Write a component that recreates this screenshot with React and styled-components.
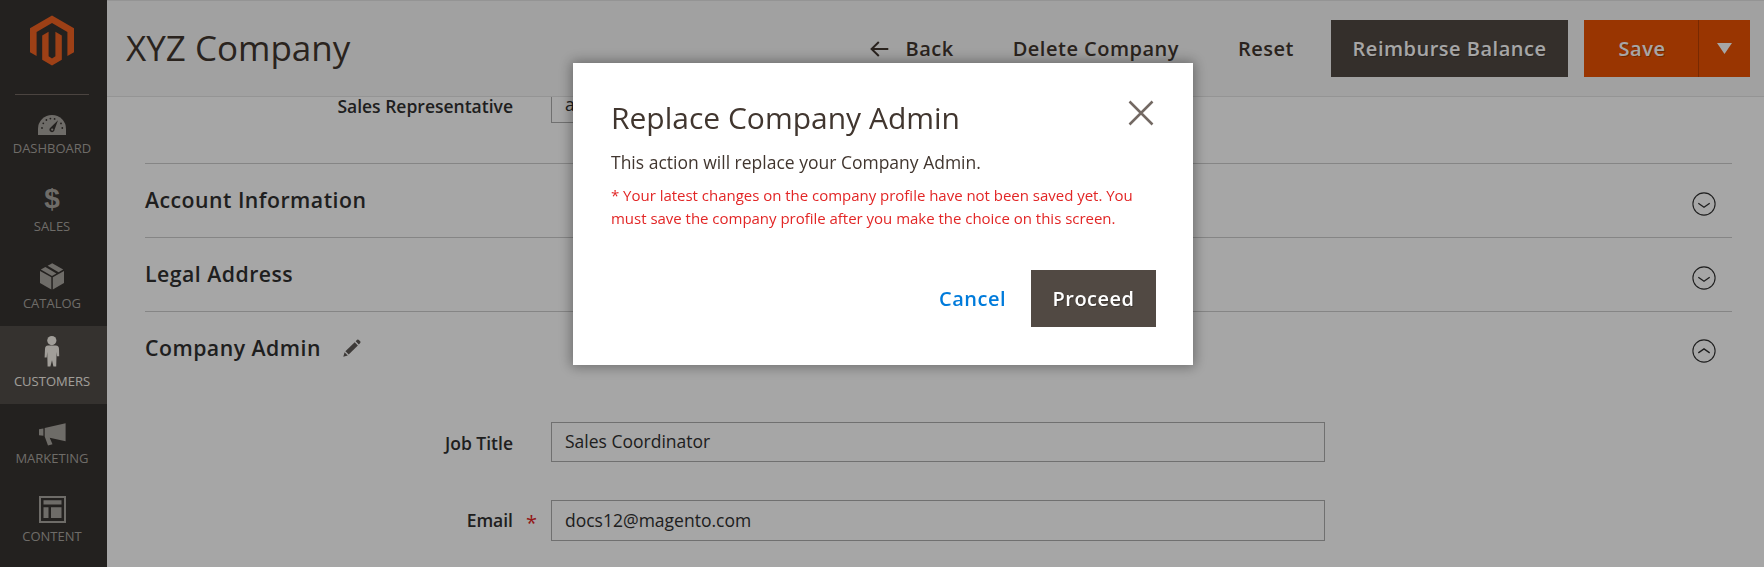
import React from "react";
import styled, { createGlobalStyle } from "styled-components";

const GlobalStyle = createGlobalStyle`
  *, *::before, *::after { box-sizing: border-box; }
  html, body { margin: 0; padding: 0; }
  body { background: #fff; overflow: hidden; color: #303030; font-size: 17.5px; }
  body, button, input { font-family: "Open Sans", "Noto Sans", sans-serif; }
  h1, h2, h3, p { margin: 0; }
`;

const Page = styled.div`
  display: flex;
  height: 567px;
  overflow: hidden;
`;

const Sidebar = styled.nav`
  flex: none;
  width: 107px;
  background: #373330;
`;

const LogoLink = styled.div`
  display: flex;
  justify-content: center;
  align-items: flex-start;
  width: 74px;
  height: 95px;
  margin: 0 0 0 15px;
  padding-top: 15px;
  border-bottom: 1px solid #736963;
`;

const NavItem = styled.div`
  display: flex;
  flex-direction: column;
  align-items: center;
  height: ${(p) => p.$height || 78}px;
  padding-right: 3px;
  background: ${(p) => (p.$active ? "#524d49" : "transparent")};
  color: ${(p) => (p.$active ? "#f7f3eb" : "#aaa6a0")};
`;

const NavIcon = styled.span`
  display: flex;
  flex: none;
  align-items: center;
  justify-content: center;
  height: 45px;
  padding-top: ${(p) => p.$drop}px;
`;

const NavLabel = styled.span`
  margin-top: ${(p) => p.$shift || 0}px;
  font-size: 13px;
  line-height: 18px;
  text-transform: uppercase;
`;

const Dollar = styled.span`
  font: 700 28px/30px "Liberation Sans", sans-serif;
`;

const Main = styled.main`
  flex: 1;
  min-width: 0;
  display: flex;
  flex-direction: column;
`;

const Header = styled.header`
  flex: none;
  display: flex;
  align-items: center;
  justify-content: space-between;
  height: 97px;
  padding: 0 14px 0 19px;
  background: #f8f8f8;
  border-top: 1px solid #e3e3e3;
  border-bottom: 1px solid #e3e3e3;
`;

const Title = styled.h1`
  font-size: 35px;
  font-weight: 400;
  line-height: 46px;
  margin-top: -2px;
  color: #41362f;
`;

const Actions = styled.div`
  display: flex;
  align-items: center;
`;

const Button = styled.button`
  display: inline-flex;
  align-items: center;
  justify-content: center;
  height: 57px;
  padding: 0;
  border: 0;
  font-size: 20px;
  font-weight: 600;
  letter-spacing: 0.5px;
  white-space: nowrap;
`;

const PlainButton = styled(Button)`
  background: none;
  color: ${(p) => (p.$link ? "#007bdb" : "#41362f")};
  margin-right: ${(p) => p.$gap}px;
  gap: 17px;
`;

const DarkButton = styled(Button)`
  width: ${(p) => p.$width}px;
  background: #514943;
  color: #fff;
  text-shadow: 1px 1px 0 rgba(0, 0, 0, 0.25);
`;

const SplitButton = styled.div`
  display: flex;
  margin-left: 16px;
`;

const SaveButton = styled(Button)`
  width: ${(p) => p.$width}px;
  background: #eb5202;
  color: #fff;
  text-shadow: 1px 1px 0 rgba(0, 0, 0, 0.25);
  padding-left: ${(p) => (p.$divided ? 0 : 2)}px;
  border-left: ${(p) => (p.$divided ? "1px solid #b84002" : "0")};
`;

const Content = styled.div`
  flex: 1;
  min-height: 0;
  overflow: hidden;
  padding: 0 32px 0 38px;
`;

const FieldRow = styled.div`
  display: flex;
  align-items: flex-start;
  margin-top: ${(p) => p.$top}px;
`;

const FieldLabel = styled.label`
  width: 368px;
  margin-right: 38px;
  padding-top: ${(p) => (p.$raised ? 8 : 9)}px;
  text-align: right;
  font-weight: 600;
  line-height: 24px;
  white-space: nowrap;
`;

const Required = styled.span`
  width: 38px;
  margin-left: -38px;
  padding: 9px 0 0 13px;
  color: #e22626;
  font-size: 20px;
  font-weight: 400;
  line-height: 28px;
`;

const FieldBox = styled.div`
  display: flex;
  align-items: center;
  width: ${(p) => p.$width || 774}px;
  height: ${(p) => p.$height}px;
  padding: 0 13px ${(p) => p.$lift}px;
  border: 1px solid #adadad;
  background: #fff;
`;

const Section = styled.section`
  display: flex;
  align-items: center;
  height: 74px;
  margin-top: ${(p) => p.$top || 0}px;
  padding: 0 16px 2px 0;
  border-top: 1px solid #ccc;
`;

const SectionTitle = styled.h2`
  font-size: 21.25px;
  font-weight: 600;
  line-height: 30px;
  letter-spacing: 0.48px;
`;

const PencilIcon = styled.svg`
  margin-left: 22px;
`;

const ToggleIcon = styled.svg`
  margin-left: auto;
  margin-top: ${(p) => (p.$open ? 6 : 8)}px;
`;

const Overlay = styled.div`
  position: fixed;
  inset: 0;
  display: flex;
  justify-content: center;
  align-items: flex-start;
  padding: 63px 0 0 2px;
  background: rgba(0, 0, 0, 0.35);
`;

const Dialog = styled.div`
  display: flex;
  flex-direction: column;
  width: 620px;
  height: 302px;
  padding: 37px 37px 38px 38px;
  background: #fff;
  box-shadow: 0 0 12px 2px rgba(0, 0, 0, 0.35);
`;

const DialogHeader = styled.div`
  display: flex;
  justify-content: space-between;
  align-items: flex-start;
`;

const DialogTitle = styled.h3`
  font-size: 30px;
  font-weight: 400;
  line-height: 36px;
  color: #41362f;
`;

const CloseIcon = styled.svg`
  margin: 0 2px 0 0;
`;

const DialogText = styled.p`
  margin-top: 13px;
  line-height: 26px;
  color: #41362f;
`;

const Warning = styled.p`
  margin-top: 9px;
  font-size: 15px;
  line-height: 23px;
  letter-spacing: -0.02px;
  color: #e22626;
`;

const DialogFooter = styled.div`
  display: flex;
  justify-content: flex-end;
  margin-top: auto;
`;

const Logo = () => (
  <svg width="44" height="51" viewBox="30 15 44 51" fill="#f26322">
    <path d="M52 15.5 74 28.2V52.2L67.4 56V32L52 23.1 36.6 32V56L30 52.2V28.2Z" />
    <path d="M42.2 35.4 48.6 31.7V56.2L52 58.4 55.4 56.2V31.7L61.8 35.4V59.8L52 65.5 42.2 59.8Z" />
  </svg>
);

const DashboardIcon = () => (
  <svg width="28" height="20" viewBox="0 0 28 20">
    <path d="M0 20V14A14 14 0 0 1 28 14V20Z" fill="currentColor" />
    <g fill="#373330">
      <circle cx="4" cy="13" r="0.9" />
      <circle cx="5.3" cy="8.3" r="0.9" />
      <circle cx="8.4" cy="5" r="0.9" />
      <circle cx="12.4" cy="3.6" r="0.9" />
      <circle cx="16.6" cy="3.9" r="0.9" />
      <circle cx="23" cy="8.4" r="0.9" />
      <circle cx="24.3" cy="13" r="0.9" />
      <path d="M20 5.2 16.6 14.6A2.6 2.6 0 1 1 12.6 12.4Z" />
    </g>
    <circle cx="14.2" cy="14.6" r="1.1" fill="currentColor" />
  </svg>
);

const CatalogIcon = () => (
  <svg width="24" height="27" viewBox="0 0 24 27" fill="currentColor">
    <path d="M0 8 11.3 14.2V26.5L0 20Z" />
    <path d="M12.8 14.2 24 8V20L12.8 26.5Z" />
    <path d="M0.8 6.6 5.4 4 16.4 10.4 12 12.9Z" />
    <path d="M10 1.5 12.2 0.2 23.2 6.6 18.6 9.2 7.6 2.8Z" />
  </svg>
);

const CustomersIcon = () => (
  <svg width="16" height="31" viewBox="0 0 16 31" fill="currentColor">
    <circle cx="7.8" cy="4.6" r="4.6" />
    <path d="M4 9.6H11.8C14 9.6 15 11 15 13L15.2 20.2H13L12.6 16 12.2 30.5H9.4L8 24.3 6.4 30.5H3.6L3.2 16 2.7 21.5H0.6L1 13C1.1 11 2 9.6 4 9.6Z" />
  </svg>
);

const MarketingIcon = () => (
  <svg width="27" height="23" viewBox="0 0 27 23" fill="currentColor">
    <path d="M0 6.3 4.4 5.4V12.8L0 12.2Z" />
    <path d="M5.7 5 26.6 0.3V18.3L10.7 14.8 13.5 21.3 9 22.5 5.7 13.6Z" />
  </svg>
);

const ContentIcon = () => (
  <svg width="27" height="27" viewBox="0 0 27 27" fill="currentColor">
    <path d="M0 0H27V27H0ZM2 2V25H25V2Z" fillRule="evenodd" />
    <path d="M4.5 4.2H22.5V8.4H4.5ZM4.5 11.2H9.5V22H4.5ZM12 11.2H22.5V22H12Z" />
  </svg>
);

const Toggle = ({ open }) => (
  <ToggleIcon $open={open} width="24" height="24" viewBox="0 0 24 24" fill="none" stroke="#303030">
    <circle cx="12" cy="12" r="11.1" strokeWidth="1.1" />
    <path d={open ? "M6.3 13.9 12 9.9 17.7 13.9" : "M6.3 11.2 12 15.3 17.7 11.2"} strokeWidth="1.3" />
  </ToggleIcon>
);

const NAV = [
  { label: "Dashboard", icon: <DashboardIcon />, height: 76, drop: 15, shift: -1 },
  { label: "Sales", icon: <Dollar>$</Dollar>, drop: 11, shift: 1 },
  { label: "Catalog", icon: <CatalogIcon />, height: 77, drop: 10 },
  { label: "Customers", icon: <CustomersIcon />, active: true, drop: 5, shift: 1 },
  { label: "Marketing", icon: <MarketingIcon />, drop: 15 },
  { label: "Content", icon: <ContentIcon />, drop: 10 },
];

export default function App() {
  return (
    <>
      <GlobalStyle />
      <Page>
        <Sidebar>
          <LogoLink>
            <Logo />
          </LogoLink>
          {NAV.map((item) => (
            <NavItem key={item.label} $active={item.active} $height={item.height}>
              <NavIcon $drop={item.drop}>{item.icon}</NavIcon>
              <NavLabel $shift={item.shift}>{item.label}</NavLabel>
            </NavItem>
          ))}
        </Sidebar>
        <Main>
          <Header>
            <Title>XYZ Company</Title>
            <Actions>
              <PlainButton $gap={59}>
                <svg width="19" height="16" viewBox="0 0 19 16" fill="none" stroke="#41362f" strokeWidth="2">
                  <path d="M18.3 8H1.6M8.8 1 1.6 8 8.8 15" />
                </svg>
                Back
              </PlainButton>
              <PlainButton $gap={59}>Delete Company</PlainButton>
              <PlainButton $gap={37}>Reset</PlainButton>
              <DarkButton $width={237}>Reimburse Balance</DarkButton>
              <SplitButton>
                <SaveButton $width={114}>Save</SaveButton>
                <SaveButton $width={52} $divided>
                  <svg width="15" height="11" viewBox="0 0 15 11">
                    <path d="M0 0H15L7.5 11Z" fill="#fff" />
                  </svg>
                </SaveButton>
              </SplitButton>
            </Actions>
          </Header>
          <Content>
            <FieldRow $top={-12}>
              <FieldLabel>Sales Representative</FieldLabel>
              <FieldBox $width={387} $height={38} $lift={0}>a</FieldBox>
            </FieldRow>
            <Section $top={40}>
              <SectionTitle>Account Information</SectionTitle>
              <Toggle />
            </Section>
            <Section>
              <SectionTitle>Legal Address</SectionTitle>
              <Toggle />
            </Section>
            <Section>
              <SectionTitle>Company Admin</SectionTitle>
              <PencilIcon width="18" height="18" viewBox="0 0 18 18" fill="#5f5a56">
                <path d="M0.3 17.7 1.6 13.2 4.8 16.4Z" />
                <path d="M2.4 12.2 11.7 3.2 14.9 6.4 5.7 15.5Z" />
                <path d="M12.7 2.2 14.1 0.8Q15 0 15.9 0.9L17.2 2.2Q18 3 17.2 3.9L15.8 5.4Z" />
              </PencilIcon>
              <Toggle open />
            </Section>
            <FieldRow $top={37}>
              <FieldLabel>Job Title</FieldLabel>
              <FieldBox $height={40} $lift={2}>Sales Coordinator</FieldBox>
            </FieldRow>
            <FieldRow $top={38}>
              <FieldLabel $raised>Email</FieldLabel>
              <Required>*</Required>
              <FieldBox $height={41} $lift={2}>docs12@magento.com</FieldBox>
            </FieldRow>
          </Content>
        </Main>
      </Page>
      <Overlay>
        <Dialog role="dialog">
          <DialogHeader>
            <DialogTitle>Replace Company Admin</DialogTitle>
            <CloseIcon width="26" height="26" viewBox="0 0 26 26" fill="none" stroke="#736963" strokeWidth="2.5">
              <path d="M1.5 1.5 24.5 24.5M24.5 1.5 1.5 24.5" />
            </CloseIcon>
          </DialogHeader>
          <DialogText>This action will replace your Company Admin.</DialogText>
          <Warning>
            * Your latest changes on the company profile have not been saved yet. You must save the
            company profile after you make the choice on this screen.
          </Warning>
          <DialogFooter>
            <PlainButton $link $gap={25}>Cancel</PlainButton>
            <DarkButton $width={125}>Proceed</DarkButton>
          </DialogFooter>
        </Dialog>
      </Overlay>
    </>
  );
}
